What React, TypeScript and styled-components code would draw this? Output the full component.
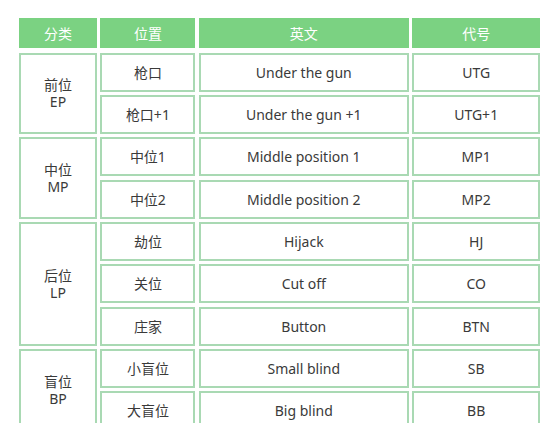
import React from 'react';
import styled, { createGlobalStyle } from 'styled-components';

const GlobalStyle = createGlobalStyle`
  html, body {
    margin: 0;
    padding: 0;
    background: #fff;
  }
  body {
    font-family: "Noto Sans", "Noto Sans CJK SC", sans-serif;
  }
`;

const Page = styled.div`
  padding: 18px 0 0 19px;
`;

const Table = styled.div`
  display: grid;
  grid-template-columns: 78px 95px 210px 128px;
  grid-template-rows: 31.4px;
  grid-auto-rows: 39px;
  column-gap: 3.4px;
  row-gap: 3.33px;
  width: 521px;
`;

const HeadCell = styled.div`
  align-self: start;
  height: 30px;
  background: #7bd282;
  color: #fff;
  font-size: 14px;
  display: flex;
  align-items: center;
  justify-content: center;
`;

const Cell = styled.div<{ $span?: number }>`
  grid-row: ${(p) => (p.$span ? `span ${p.$span}` : 'auto')};
  box-sizing: border-box;
  border: 2px solid #a9d9b3;
  color: #3a3a3a;
  font-size: 14px;
  line-height: 17px;
  display: flex;
  align-items: center;
  justify-content: center;
  text-align: center;
`;

type Row = { pos: string; en: string; code: string };
type Group = { cn: string; abbr: string; rows: Row[] };

const groups: Group[] = [
  {
    cn: '前位',
    abbr: 'EP',
    rows: [
      { pos: '枪口', en: 'Under the gun', code: 'UTG' },
      { pos: '枪口+1', en: 'Under the gun +1', code: 'UTG+1' },
    ],
  },
  {
    cn: '中位',
    abbr: 'MP',
    rows: [
      { pos: '中位1', en: 'Middle position 1', code: 'MP1' },
      { pos: '中位2', en: 'Middle position 2', code: 'MP2' },
    ],
  },
  {
    cn: '后位',
    abbr: 'LP',
    rows: [
      { pos: '劫位', en: 'Hijack', code: 'HJ' },
      { pos: '关位', en: 'Cut off', code: 'CO' },
      { pos: '庄家', en: 'Button', code: 'BTN' },
    ],
  },
  {
    cn: '盲位',
    abbr: 'BP',
    rows: [
      { pos: '小盲位', en: 'Small blind', code: 'SB' },
      { pos: '大盲位', en: 'Big blind', code: 'BB' },
    ],
  },
];

const App: React.FC = () => {
  return (
    <Page>
      <GlobalStyle />
      <Table>
        <HeadCell>分类</HeadCell>
        <HeadCell>位置</HeadCell>
        <HeadCell>英文</HeadCell>
        <HeadCell>代号</HeadCell>
        {groups.map((g) =>
          g.rows.map((r, i) => (
            <React.Fragment key={r.code}>
              {i === 0 && (
                <Cell $span={g.rows.length}>
                  {g.cn}
                  <br />
                  {g.abbr}
                </Cell>
              )}
              <Cell>{r.pos}</Cell>
              <Cell>{r.en}</Cell>
              <Cell>{r.code}</Cell>
            </React.Fragment>
          ))
        )}
      </Table>
    </Page>
  );
};

export default App;
